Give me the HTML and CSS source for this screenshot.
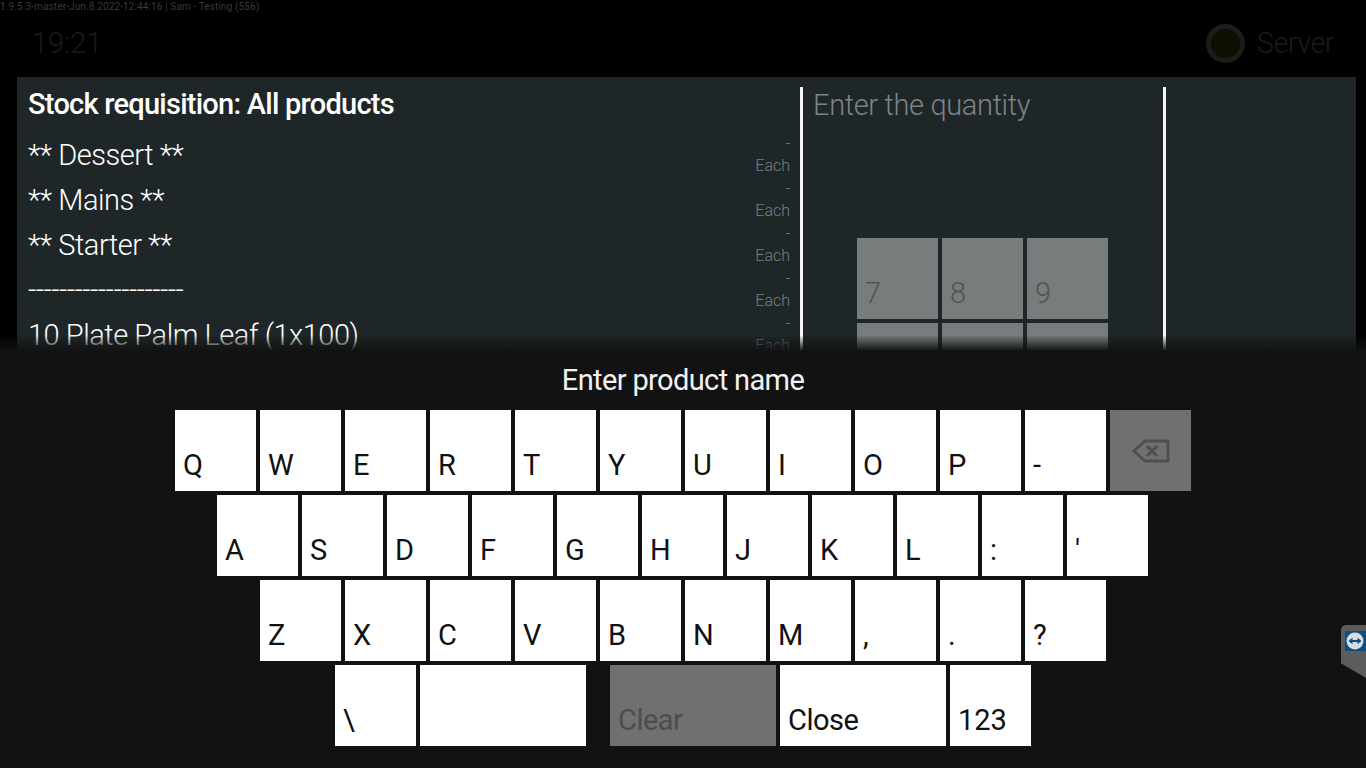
FILE: index.html
```html
<!DOCTYPE html>
<html lang="en">
<head>
    <meta charset="UTF-8">
    <meta name="viewport" content="width=device-width, initial-scale=1.0">
    <title>Stock requisition</title>
    <link rel="stylesheet" href="styles.css">
</head>
<body>
    <div class="version">1.9.5.3-master-Jun.8.2022-12:44:16 | Sam - Testing (556)</div>
    <div class="topbar">
        <div class="clock">19:21</div>
        <div class="server">
            <span class="led"></span>
            <span class="serverlabel">Server</span>
        </div>
    </div>
    <div class="panel">
        <div class="listcol">
            <h2 class="listtitle">Stock requisition: All products</h2>
            <div class="item"><span class="name">** Dessert **</span><span class="unit"><span>-</span><span>Each</span></span></div>
            <div class="item"><span class="name">** Mains **</span><span class="unit"><span>-</span><span>Each</span></span></div>
            <div class="item"><span class="name">** Starter **</span><span class="unit"><span>-</span><span>Each</span></span></div>
            <div class="item"><span class="name dashes">--------------------</span><span class="unit"><span>-</span><span>Each</span></span></div>
            <div class="item"><span class="name">10 Plate Palm Leaf (1x100)</span><span class="unit"><span>-</span><span>Each</span></span></div>
        </div>
        <div class="qtycol">
            <div class="qtytitle">Enter the quantity</div>
            <div class="numpad">
                <div class="numkey">7</div>
                <div class="numkey">8</div>
                <div class="numkey">9</div>
                <div class="numkey">4</div>
                <div class="numkey">5</div>
                <div class="numkey">6</div>
            </div>
        </div>
        <div class="restcol"></div>
    </div>

    <div class="keyboard">
        <div class="kbfade"></div>
        <div class="kbbody">
            <div class="kbtitle">Enter product name</div>
            <div class="kbrow">
                <div class="key">Q</div><div class="key">W</div><div class="key">E</div><div class="key">R</div>
                <div class="key">T</div><div class="key">Y</div><div class="key">U</div><div class="key">I</div>
                <div class="key">O</div><div class="key">P</div><div class="key">-</div>
                <div class="key off backspace">
                    <svg width="38" height="26" viewBox="0 0 38 26">
                        <path d="M36 3H13L2 13l11 10h23z" fill="none" stroke="#4f4f4f" stroke-width="3"/>
                        <path d="M15 8l10 10M25 8L15 18" fill="none" stroke="#4f4f4f" stroke-width="3"/>
                    </svg>
                </div>
            </div>
            <div class="kbrow kbrow2">
                <div class="key">A</div><div class="key">S</div><div class="key">D</div><div class="key">F</div>
                <div class="key">G</div><div class="key">H</div><div class="key">J</div><div class="key">K</div>
                <div class="key">L</div><div class="key">:</div><div class="key">'</div>
            </div>
            <div class="kbrow">
                <div class="key">Z</div><div class="key">X</div><div class="key">C</div><div class="key">V</div>
                <div class="key">B</div><div class="key">N</div><div class="key">M</div><div class="key">,</div>
                <div class="key">.</div><div class="key">?</div>
            </div>
            <div class="kbrow">
                <div class="key">\</div>
                <div class="key wide"></div>
                <div class="key wide off clear">Clear</div>
                <div class="key wide">Close</div>
                <div class="key">123</div>
            </div>
        </div>
    </div>

    <div class="tvtab">
        <svg width="21" height="20" viewBox="0 0 21 20">
            <rect width="21" height="20" fill="#0b4f86"/>
            <circle cx="10" cy="10" r="8.5" fill="#d9dde0"/>
            <path d="M3.5 10l4-3.2v2.1h5V6.8l4 3.2-4 3.2v-2.1h-5v2.1z" fill="#0b4f86"/>
        </svg>
    </div>
</body>
</html>
```

FILE: styles.css
```css
* {
    box-sizing: border-box;
}
html, body {
    margin: 0;
    height: 768px;
    overflow: hidden;
}
body {
    position: relative;
    background-color: #000;
    font-family: Roboto, "Liberation Sans", sans-serif;
}
.version {
    height: 13px;
    font-size: 10px;
    line-height: 13px;
    letter-spacing: 0.12px;
    color: #3a3a3a;
    white-space: nowrap;
}
.topbar {
    display: flex;
    justify-content: space-between;
    align-items: center;
    height: 60px;
    margin-bottom: 4px;
    padding: 0 32px;
    font-size: 29px;
    font-weight: 300;
    color: #1b1b1b;
}
.server {
    display: flex;
    align-items: center;
    gap: 12px;
}
.serverlabel {
    letter-spacing: -0.6px;
}
.led {
    width: 39px;
    height: 39px;
    border-radius: 50%;
    background-color: #0b1000;
    border: 5px solid #1c1c1c;
}
.panel {
    display: flex;
    margin: 0 10px 0 17px;
    height: 620px;
    padding-top: 10px;
    background-color: #1e2628;
}
.listcol {
    width: 783px;
    padding: 0 10px 0 11px;
    color: #fff;
}
.listtitle {
    margin: 0 0 10px;
    height: 35px;
    font-size: 29px;
    font-weight: 500;
    line-height: 35px;
    letter-spacing: -0.75px;
}
.item {
    display: flex;
    justify-content: space-between;
    align-items: center;
    height: 45px;
    font-size: 29px;
    font-weight: 300;
    letter-spacing: -0.47px;
}
.dashes {
    letter-spacing: -0.55px;
}
.unit {
    display: flex;
    flex-direction: column;
    align-items: flex-end;
    font-size: 16px;
    line-height: 22px;
    letter-spacing: 0;
    color: #7a7f81;
}
.qtycol {
    width: 366px;
    height: 500px;
    padding-left: 10px;
    border-left: 3px solid #f5f5f5;
    border-right: 3px solid #f5f5f5;
}
.qtytitle {
    height: 36px;
    font-size: 29px;
    font-weight: 300;
    line-height: 36px;
    letter-spacing: -0.35px;
    color: #7d8387;
}
.numpad {
    display: grid;
    grid-template-columns: repeat(3, 81px);
    gap: 4px;
    margin: 115px 0 0 44px;
}
.numkey {
    display: flex;
    align-items: flex-end;
    height: 81px;
    padding: 0 0 8px 8px;
    font-size: 29px;
    font-weight: 300;
    line-height: 36px;
    color: #505454;
    background-color: #777c7c;
}
.restcol {
    flex: 1;
}
.keyboard {
    position: absolute;
    left: 0;
    right: 0;
    bottom: 0;
    top: 335px;
    display: flex;
    flex-direction: column;
}
.kbfade {
    height: 16px;
    background: linear-gradient(to bottom, rgba(18, 18, 18, 0), #121212);
}
.kbbody {
    flex: 1;
    background-color: #121212;
}
.kbtitle {
    height: 59px;
    font-size: 29px;
    font-weight: 400;
    line-height: 58px;
    text-align: center;
    letter-spacing: -0.62px;
    color: #f2f2f2;
}
.kbrow {
    display: flex;
    justify-content: center;
    gap: 4px;
    margin-bottom: 4px;
}
.kbrow2 {
    padding-right: 1px;
}
.key {
    display: flex;
    align-items: flex-end;
    width: 81px;
    height: 81px;
    padding: 0 0 8px 8px;
    font-size: 29px;
    font-weight: 400;
    line-height: 36px;
    color: #111;
    background-color: #fff;
}
.wide {
    width: 166px;
    letter-spacing: -0.5px;
}
.off {
    color: #4d4d4d;
    background-color: #707070;
}
.clear {
    margin-left: 20px;
}
.backspace {
    align-items: center;
    justify-content: center;
    padding: 0;
}
.tvtab {
    position: absolute;
    top: 625px;
    left: 1341px;
    width: 25px;
    height: 53px;
    padding: 6px 0 0 4px;
    background-color: #5c5c5c;
    border-radius: 5px 0 0 0;
    clip-path: polygon(0 0, 100% 0, 100% 100%, 0 72%);
}
```
